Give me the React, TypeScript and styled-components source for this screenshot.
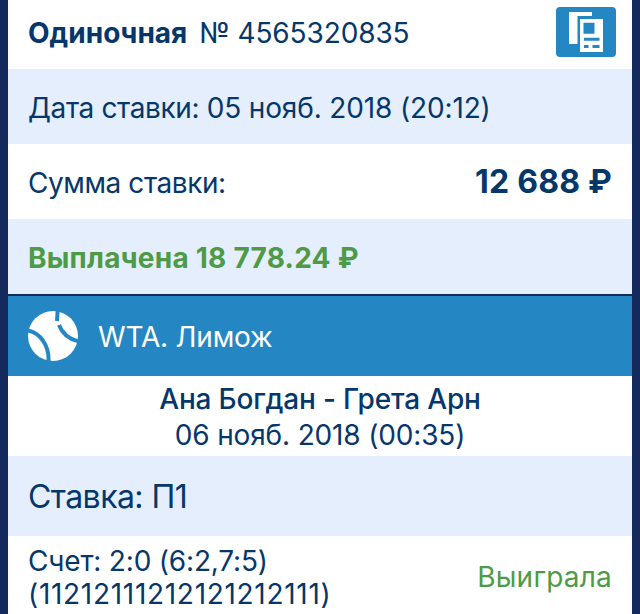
import React from 'react'
import styled, {createGlobalStyle} from 'styled-components'

const GlobalStyle = createGlobalStyle`
  body {
    margin: 0;
    background: #142a5c;
    overflow: hidden;
  }
`;

const Slip = styled.main`
  box-sizing: border-box;
  height: 614px;
  padding: 0 8px;
  overflow: hidden;
  background: #142a5c;
  color: #06376b;
  font-family: Inter, "Liberation Sans", sans-serif;
  font-size: 28px;
  line-height: 36px;
  white-space: nowrap;
`;

const Row = styled.div<{$height?: number; $tinted?: boolean}>`
  box-sizing: border-box;
  display: flex;
  align-items: center;
  justify-content: space-between;
  height: ${p => p.$height || 75}px;
  padding: 2px 20px 0;
  background: ${p => p.$tinted ? '#e4eefc' : '#fff'};
`;

const HeaderRow = styled(Row)`
  align-items: flex-start;
  padding: 7px 16px 0 20px;
`;

const Text = styled.span<{$spacing?: number}>`
  letter-spacing: ${p => p.$spacing || 0}px;
`;

const Title = styled(Text)`
  padding-top: 8px;
`;

const Kind = styled.b`
  margin-right: 12px;
  font-weight: 700;
  letter-spacing: 0;
`;

const Amount = styled(Text)`
  padding-bottom: 2px;
  font-size: 32px;
  font-weight: 700;
  line-height: 38px;
`;

const Paid = styled(Text)`
  color: #4e9a47;
  font-weight: 700;
`;

const CopyButton = styled.button`
  width: 60px;
  height: 50px;
  padding: 0;
  border: 0;
  border-radius: 4px;
  background: #2487c3;

  svg {
    display: block;
  }
`;

const League = styled.div`
  display: flex;
  align-items: center;
  gap: 20px;
  height: 80px;
  margin-top: 2px;
  padding: 0 20px;
  background: #2487c3;
  color: #fff;
`;

const LeagueName = styled(Text)`
  padding-top: 2px;
`;

const Match = styled.div`
  box-sizing: border-box;
  display: flex;
  flex-direction: column;
  align-items: center;
  height: 80px;
  padding-top: 5px;
  background: #fff;
`;

const Players = styled(Text)`
  font-weight: 500;
`;

const Pick = styled(Text)`
  font-size: 32px;
`;

const Score = styled.div`
  display: flex;
  flex-direction: column;
  padding-top: 1px;
  line-height: 33px;
`;

const Result = styled(Text)`
  color: #4e9a47;
`;

function CopyIcon() {
    return (
        <svg width="60" height="50" viewBox="0 0 60 50">
            <path fill="#fff" d="M13 5h23v4H21.500v28H13z"/>
            <path fill="#fff" fillRule="evenodd" d="M24 12h23v33H24zM27.500 15.700v11h11v-11zM28 30.700v3h15.500v-3zM28 38v3h4.500v-3zM36.500 38v3h7v-3z"/>
        </svg>
    )
}

function BallIcon() {
    return (
        <svg width="50" height="50" viewBox="0 0 50 50">
            <circle cx="25" cy="25" r="25" fill="#fff"/>
            <g fill="none" stroke="#2487c3" strokeWidth="4">
                <path d="M0 19.500C12 22 21.500 34 20.500 51"/>
                <path d="M29.700 -1L29 10"/>
                <path d="M31 14C34 22 40 28 51 30.500"/>
            </g>
        </svg>
    )
}

function App() {
    return (
        <>
            <GlobalStyle/>
            <Slip>
                <HeaderRow $height={69}>
                    <Title $spacing={-0.12}><Kind>Одиночная</Kind>№ 4565320835</Title>
                    <CopyButton aria-label="Копировать"><CopyIcon/></CopyButton>
                </HeaderRow>
                <Row $tinted>
                    <Text $spacing={-0.14}><Text $spacing={-0.38}>Дата ставки: </Text>05 нояб. 2018 (20:12)</Text>
                </Row>
                <Row>
                    <Text $spacing={-0.43}>Сумма ставки:</Text>
                    <Amount $spacing={0.2}>12 688 ₽</Amount>
                </Row>
                <Row $tinted>
                    <Paid $spacing={0.25}>Выплачена 18 778.24 ₽</Paid>
                </Row>
                <League>
                    <BallIcon/>
                    <LeagueName $spacing={-0.2}>WTA. Лимож</LeagueName>
                </League>
                <Match>
                    <Players $spacing={-0.16}>Ана Богдан - Грета Арн</Players>
                    <Text $spacing={-0.15}>06 нояб. 2018 (00:35)</Text>
                </Match>
                <Row $height={80} $tinted>
                    <Pick $spacing={-0.55}>Ставка: П1</Pick>
                </Row>
                <Row $height={80}>
                    <Score>
                        <Text $spacing={-0.18}>Счет: 2:0 (6:2,7:5)</Text>
                        <Text $spacing={0.7}>(11212111212121212111)</Text>
                    </Score>
                    <Result $spacing={0.2}>Выиграла</Result>
                </Row>
            </Slip>
        </>
    )
}

export default App;
